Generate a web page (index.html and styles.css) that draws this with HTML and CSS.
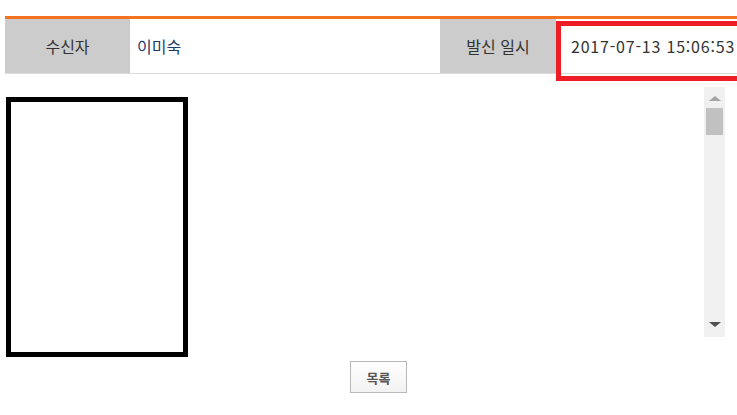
FILE: index.html
```html
<!DOCTYPE html>
<html lang="ko">
<head>
<meta charset="utf-8">
<link rel="stylesheet" href="styles.css">
</head>
<body>
<div class="page">
  <div class="info">
    <div class="label">수신자</div>
    <div class="value name">이미숙</div>
    <div class="label">발신 일시</div>
    <div class="value date">2017-07-13 15:06:53</div>
    <div class="mark"></div>
  </div>
  <div class="content">
    <div class="redact"></div>
    <div class="scrollbar">
      <div class="arrow up"></div>
      <div class="thumb"></div>
      <div class="track"></div>
      <div class="arrow down"></div>
    </div>
  </div>
  <div class="footer">
    <button class="btn" type="button">목록</button>
  </div>
</div>
</body>
</html>
```
FILE: styles.css
```css
html, body {
  margin: 0;
  padding: 0;
  background: #fff;
  overflow: hidden;
}
body {
  font-family: "Noto Sans CJK KR", "Noto Sans", sans-serif;
  color: #333;
}
.page {
  padding-top: 16px;
  width: 737px;
  height: 415px;
  box-sizing: border-box;
}
.info {
  position: relative;
  margin-left: 5px;
  border-top: 3px solid #f37321;
  border-bottom: 1px solid #dcdcdc;
  display: grid;
  grid-template-columns: 125px 310px 116px 1fr;
  height: 54px;
  font-size: 16px;
}
.label {
  background: #cccccc;
  display: flex;
  align-items: center;
  justify-content: center;
  color: #333;
}
.value {
  display: flex;
  align-items: center;
  padding-left: 7px;
}
.name {
  color: #1f3b6d;
}
.date {
  padding-left: 15px;
  color: #333;
  white-space: nowrap;
  letter-spacing: 0.8px;
}
.mark {
  position: absolute;
  left: 551px;
  top: 2px;
  width: 200px;
  height: 60px;
  box-sizing: border-box;
  border: 5px solid #ee1c24;
}
.content {
  display: flex;
  justify-content: space-between;
  align-items: flex-start;
  margin-top: 13px;
}
.redact {
  margin-top: 10px;
  margin-left: 6px;
  width: 182px;
  height: 260px;
  box-sizing: border-box;
  border: 5px solid #000;
}
.scrollbar {
  width: 21px;
  height: 250px;
  margin-right: 12px;
  background: #f0f0f0;
  display: flex;
  flex-direction: column;
  align-items: center;
}
.arrow {
  width: 0;
  height: 0;
  border-left: 6px solid transparent;
  border-right: 6px solid transparent;
}
.arrow.up {
  margin-top: 9px;
  border-bottom: 5px solid #a3a3a3;
}
.arrow.down {
  margin-bottom: 10px;
  border-top: 5px solid #505050;
}
.thumb {
  margin-top: 7px;
  width: 17px;
  height: 27px;
  background: #c1c1c1;
}
.track {
  flex: 1;
}
.footer {
  display: flex;
  justify-content: center;
  padding-left: 20px;
  margin-top: 4px;
}
.btn {
  width: 57px;
  height: 32px;
  border: 1px solid #b9b9b9;
  background: linear-gradient(#ffffff, #f2f2f2);
  font-family: "Noto Sans CJK KR", sans-serif;
  font-size: 13px;
  font-weight: bold;
  color: #555;
  padding: 0;
  border-radius: 0;
}
```
